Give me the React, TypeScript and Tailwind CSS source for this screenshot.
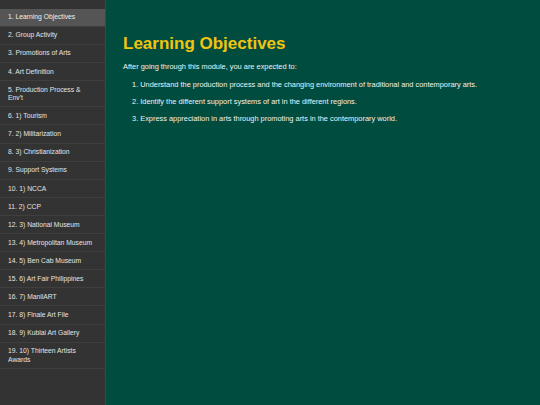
const lessons = [
  "1. Learning Objectives",
  "2. Group Activity",
  "3. Promotions of Arts",
  "4. Art Definition",
  "5. Production Process & Env't",
  "6. 1) Tourism",
  "7. 2) Militarization",
  "8. 3) Christianization",
  "9. Support Systems",
  "10. 1) NCCA",
  "11. 2) CCP",
  "12. 3) National Museum",
  "13. 4) Metropolitan Museum",
  "14. 5) Ben Cab Museum",
  "15. 6) Art Fair Philippines",
  "16. 7) ManilART",
  "17. 8) Finale Art File",
  "18. 9) Kublai Art Gallery",
  "19. 10) Thirteen Artists Awards",
];

const objectives = [
  "Understand the production process and the changing environment of traditional and contemporary arts.",
  "Identify the different support systems of art in the different regions.",
  "Express appreciation in arts through promoting arts in the contemporary world.",
];

const App = () => {
  return (
    <div className="flex h-screen w-full font-['Liberation_Sans',Arial,sans-serif]">
      <aside className="w-[106px] shrink-0 bg-[#333333] border-r border-[#444444] pt-[8.5px]">
        <ul>
          {lessons.map((item, i) => (
            <li
              key={item}
              className={
                i === 0
                  ? "bg-[#555555] text-[#f0f0f0] text-[6.75px] leading-[8.4px] pl-2 pr-3 pt-[4.8px] pb-[3.9px] border-b border-[#3f3f3f]"
                  : "text-[#e4e4e4] text-[6.75px] leading-[8.4px] pl-2 pr-3 pt-[4.8px] pb-[3.9px] border-b border-[#3f3f3f]"
              }
            >
              {item}
            </li>
          ))}
        </ul>
      </aside>
      <main className="flex-1 bg-[#004d40] pl-[17px] pt-[34px]">
        <h1 className="text-[17px] font-bold text-[#f1c40f] leading-[20px]">
          Learning Objectives
        </h1>
        <p className="mt-[8px] text-[7.4px] leading-[9px] text-[#f2f2f2]">
          After going through this module, you are expected to:
        </p>
        <ol className="mt-[9px] pl-[9px] flex flex-col gap-[8px]">
          {objectives.map((o, i) => (
            <li key={i} className="text-[7.4px] leading-[9px] text-[#f2f2f2]">
              {i + 1}. {o}
            </li>
          ))}
        </ol>
      </main>
    </div>
  );
};

export default App;
